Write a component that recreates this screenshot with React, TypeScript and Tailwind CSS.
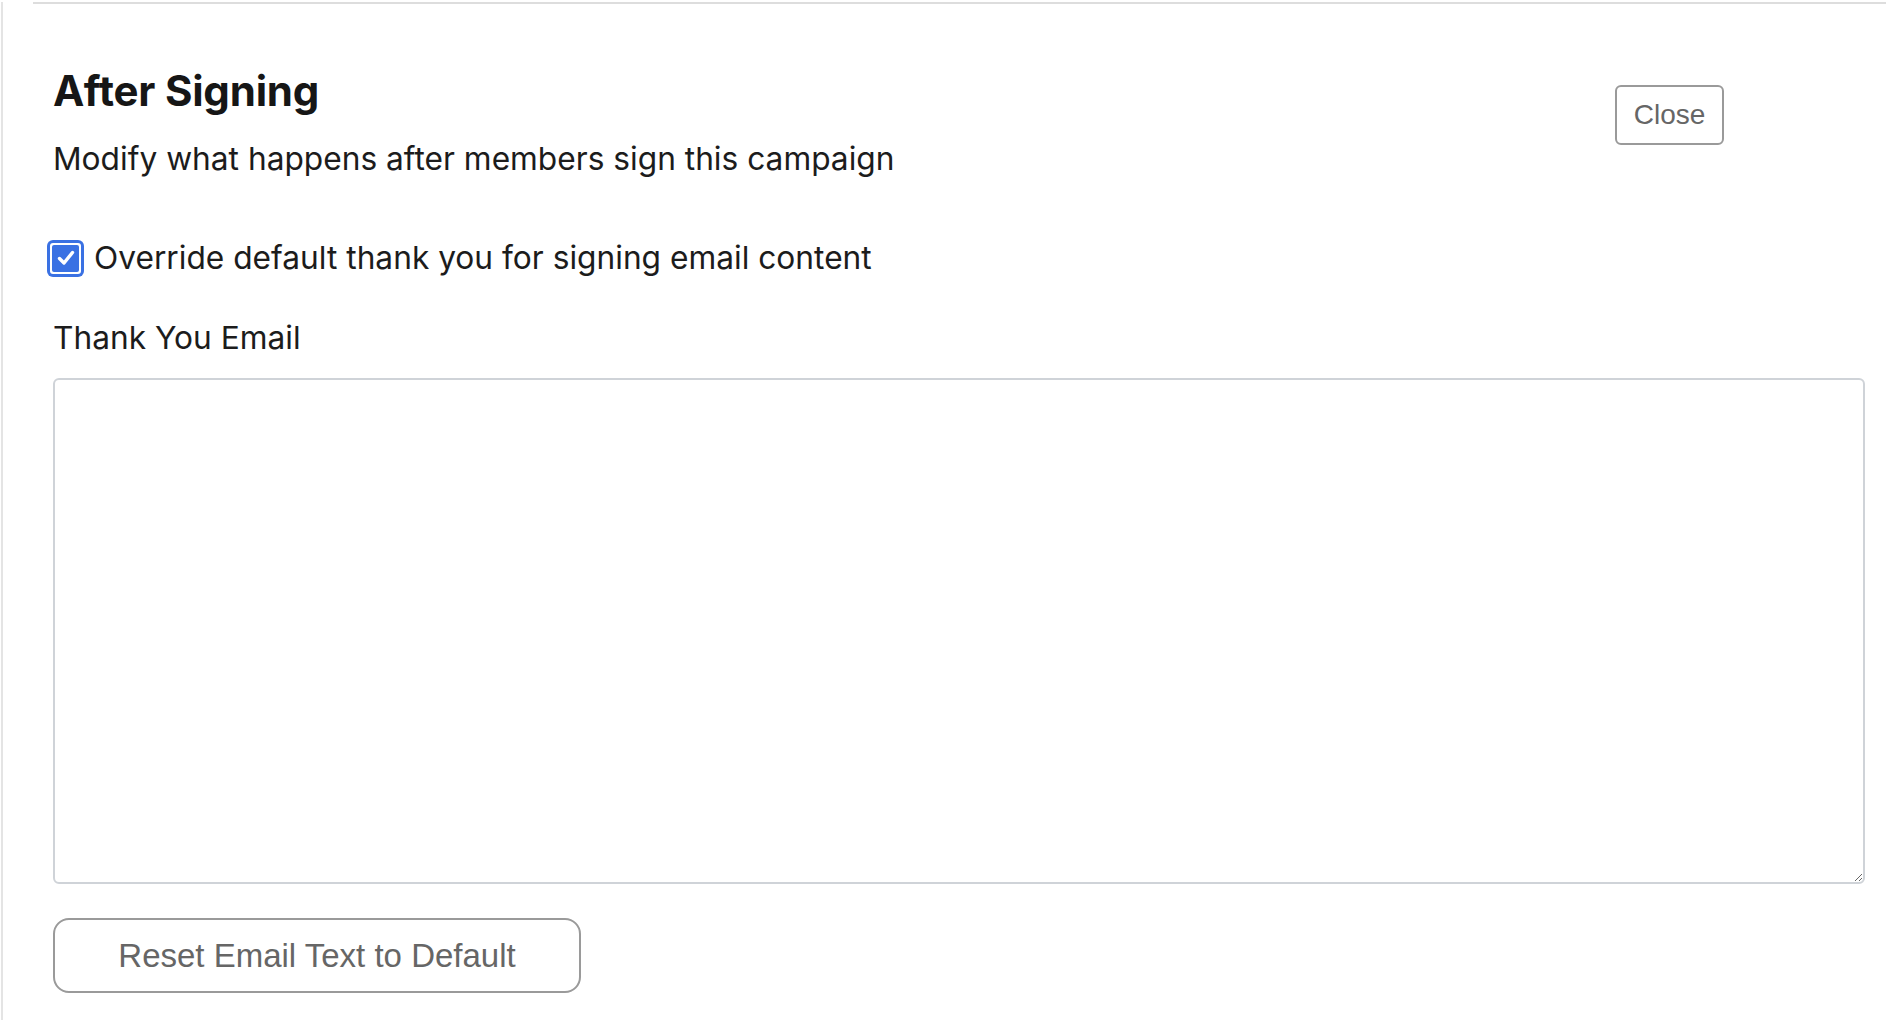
import React from "react";

export default function App() {
  return (
    <div
      className="min-h-screen ml-[1px] border-l-2 border-[#e4e4e4] bg-white"
      style={{ fontFamily: "Inter, 'Noto Sans', sans-serif" }}
    >
      <div className="ml-[30px] mr-[8px] mt-[2px] h-[2px] bg-[#dddddd]" />
      <div className="pl-[50px] pr-[29px]">
        <div className="flex items-start justify-between mt-[62px]">
          <div>
            <h1 className="text-[42px] leading-[50px] font-bold text-[#161616] tracking-[-0.2px]">
              After Signing
            </h1>
            <p className="mt-[24px] text-[31.7px] leading-[38px] text-[#1c1c1c]">
              Modify what happens after members sign this campaign
            </p>
          </div>
          <button
            className="mt-[19px] mr-[141px] w-[109px] h-[60px] rounded-[6px] border-2 border-[#9a9a9a] bg-white text-[28px] text-[#666666]"
            style={{ fontFamily: "'Liberation Sans', Arial, sans-serif" }}
          >
            Close
          </button>
        </div>

        <div className="mt-[61px] flex items-center h-[38px] -ml-[6px]">
          <div className="w-[37px] h-[37px] rounded-[6px] bg-[#3a71e3] p-[3px]">
            <div className="w-full h-full rounded-[3px] bg-white p-[2px]">
              <div className="w-full h-full rounded-[2px] bg-[#3a71e3] flex items-center justify-center">
                <svg width="22" height="22" viewBox="0 0 22 22">
                  <path d="M4.5 11.5 L9 16 L17.5 5.5" fill="none" stroke="#ffffff" strokeWidth="3.4" strokeLinecap="round" strokeLinejoin="round" />
                </svg>
              </div>
            </div>
          </div>
          <span className="ml-[10px] text-[31.7px] leading-[38px] text-[#1c1c1c]">
            Override default thank you for signing email content
          </span>
        </div>

        <div className="mt-[42px] text-[31.7px] leading-[38px] text-[#1c1c1c]">Thank You Email</div>

        <textarea className="mt-[21px] block w-full h-[506px] rounded-[6px] border-2 border-[#cfd3d8] bg-white outline-none" />

        <button
          className="mt-[34px] block w-[528px] h-[75px] rounded-[16px] border-2 border-[#9a9a9a] bg-white text-[33px] text-[#666666]"
          style={{ fontFamily: "'Liberation Sans', Arial, sans-serif" }}
        >
          Reset Email Text to Default
        </button>
      </div>
    </div>
  );
}
